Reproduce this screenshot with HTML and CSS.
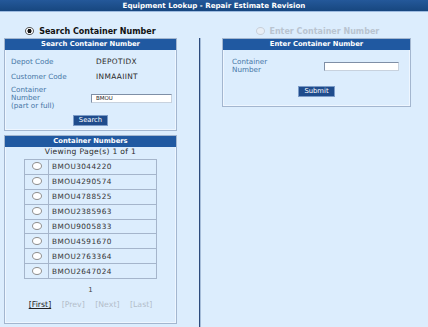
FILE: index.html
```html
<!DOCTYPE html>
<html>
<head>
    <meta charset="UTF-8" />
    <title>Equipment Lookup - Repair Estimate Revision</title>
<link rel="stylesheet" href="styles.css">
</head>
<body>
    <div class="titlebar">Equipment Lookup - Repair Estimate Revision</div>

    <div class="layout">
        <label class="mode"><input type="radio" name="mode" class="radio" checked /> Search Container Number</label>
        <div></div>
        <label class="mode off"><input type="radio" name="mode" class="radio" disabled /> Enter Container Number</label>

        <div class="leftcol">
            <div class="panel search">
                <div class="panelhead">Search Container Number</div>
                <div class="formgrid">
                    <span class="lbl">Depot Code</span><span class="val">DEPOTIDX</span>
                    <span class="lbl">Customer Code</span><span class="val">INMAAIINT</span>
                    <span class="lbl multi">Container<br>Number<br>(part or full)</span>
                    <span class="field"><input type="text" class="txt wide" value="BMOU" /></span>
                </div>
                <div class="btnrow"><button class="btn">Search</button></div>
            </div>

            <div class="panel results">
                <div class="panelhead">Container Numbers</div>
                <p class="viewing">Viewing Page(s) 1 of 1</p>
                <table class="list">
                    <tr><td class="pick"><input type="radio" name="cn" class="radio" /></td><td>BMOU3044220</td></tr>
                    <tr><td class="pick"><input type="radio" name="cn" class="radio" /></td><td>BMOU4290574</td></tr>
                    <tr><td class="pick"><input type="radio" name="cn" class="radio" /></td><td>BMOU4788525</td></tr>
                    <tr><td class="pick"><input type="radio" name="cn" class="radio" /></td><td>BMOU2385963</td></tr>
                    <tr><td class="pick"><input type="radio" name="cn" class="radio" /></td><td>BMOU9005833</td></tr>
                    <tr><td class="pick"><input type="radio" name="cn" class="radio" /></td><td>BMOU4591670</td></tr>
                    <tr><td class="pick"><input type="radio" name="cn" class="radio" /></td><td>BMOU2763364</td></tr>
                    <tr><td class="pick"><input type="radio" name="cn" class="radio" /></td><td>BMOU2647024</td></tr>
                </table>
                <p class="pagenum">1</p>
                <p class="pager">
                    <a href="#" class="on">[First]</a>
                    <span>[Prev]</span>
                    <span>[Next]</span>
                    <span>[Last]</span>
                </p>
            </div>
        </div>

        <div class="divider"></div>

        <div class="rightcol">
            <div class="panel enter">
                <div class="panelhead">Enter Container Number</div>
                <div class="entergrid">
                    <span class="lbl multi">Container<br>Number</span>
                    <span class="field"><input type="text" class="txt narrow" /></span>
                </div>
                <div class="btnrow submitrow"><button class="btn">Submit</button></div>
            </div>
        </div>
    </div>
</body>
</html>
```

FILE: styles.css
```css
body{
    margin:0;
    background-color:#dcedfd;
    font-family:"DejaVu Sans", Verdana, sans-serif;
    font-size:7px;
    color:#2a2a2a;
    height:100vh;
    overflow:hidden;
}
p{
    margin:0;
}
.titlebar{
    height:11px;
    line-height:11px;
    background:linear-gradient(#24589a, #17477f);
    border-bottom:1px solid #9dbbe0;
    color:#fff;
    font-weight:bold;
    font-size:7.1px;
    text-align:center;
}
.layout{
    display:grid;
    grid-template-columns:173px 45px 189px;
    grid-template-rows:26px auto;
    padding-left:4px;
    height:calc(100vh - 12px);
}
.mode{
    align-self:end;
    padding-bottom:2px;
    text-align:center;
    font-weight:bold;
    font-size:8px;
    color:#111;
    line-height:9px;
}
.mode.off{
    color:#b9c4d0;
    margin-left:2px;
}
.radio{
    -webkit-appearance:none;
    appearance:none;
    width:9px;
    height:8px;
    margin:0 2px 0 0;
    border:1px solid #8f8f8f;
    border-radius:50%;
    background:#fff;
    vertical-align:-1px;
    box-sizing:border-box;
}
.radio:checked{
    background:radial-gradient(circle, #111 0 1.8px, #fff 2.3px);
    border-color:#555;
}
.radio:disabled{
    border-color:#c8cfd8;
    background:#e8eef5;
}
.leftcol{
    display:flex;
    flex-direction:column;
    gap:4px;
}
.panel{
    border:1px solid #a3b6cf;
    box-shadow:inset 0 0 0 1px #eef6ff;
}
.panelhead{
    height:11px;
    line-height:11px;
    background-color:#2059a1;
    color:#fff;
    font-weight:bold;
    font-size:6.8px;
    text-align:center;
}
.lbl{
    color:#4676a6;
    font-size:7.2px;
}
.formgrid{
    display:grid;
    grid-template-columns:80px 1fr;
    grid-auto-rows:15px;
    align-items:center;
    padding:4px 0 0 6px;
}
.formgrid .multi{
    line-height:8px;
    grid-row:span 2;
    align-self:start;
    padding-top:2px;
}
.formgrid .field{
    grid-row:span 2;
    align-self:center;
    margin-top:-2px;
}
.val{
    padding-left:5px;
    font-size:7.4px;
    letter-spacing:0.35px;
}
.txt{
    box-sizing:border-box;
    height:9px;
    border:1px solid #7f8fa6;
    border-right-color:#c8d2de;
    border-bottom-color:#c8d2de;
    background:#fff;
    padding:0 0 0 4px;
    font-family:"DejaVu Sans", sans-serif;
    font-size:5.5px;
    color:#222;
    display:block;
}
.wide{
    width:81px;
}
.narrow{
    width:75px;
}
.btnrow{
    text-align:center;
    padding:1px 0 4px;
}
.btn{
    height:11px;
    padding:0 5px;
    background-color:#1f4c8c;
    border:1px solid #7c9cc8;
    color:#fff;
    font-family:"DejaVu Sans", sans-serif;
    font-size:6.8px;
    line-height:9px;
}
.results{
    padding-bottom:14px;
}
.viewing{
    line-height:10px;
    text-align:center;
    font-size:7.6px;
    letter-spacing:0.3px;
}
.list{
    border-collapse:collapse;
    margin:2px auto 0;
    width:133px;
    border:1px solid #7e93b2;
}
.list td{
    border:1px solid #a5b5cb;
    height:13.9px;
    padding:0 0 0 3px;
    font-size:7.3px;
    letter-spacing:0.45px;
    color:#333;
}
.list td.pick{
    width:23px;
    padding:0;
    text-align:center;
}
.list .radio{
    margin:0;
    width:10px;
}
.pagenum{
    text-align:center;
    line-height:9px;
    margin-top:7px;
    color:#444;
    font-size:7px;
}
.pager{
    text-align:center;
    line-height:9px;
    margin-top:5px;
    word-spacing:8px;
    color:#b3bdca;
    font-size:7.8px;
}
.pager .on{
    color:#222;
}
.divider{
    margin-left:22px;
    width:0;
    border-left:1px solid #2c4b7c;
    border-right:1px solid #a5bcd8;
}
.entergrid{
    display:grid;
    grid-template-columns:92px 75px;
    align-items:center;
    padding:8px 0 0 9px;
}
.entergrid .multi{
    line-height:8px;
}
.submitrow{
    padding:12px 0 9px;
}
```
